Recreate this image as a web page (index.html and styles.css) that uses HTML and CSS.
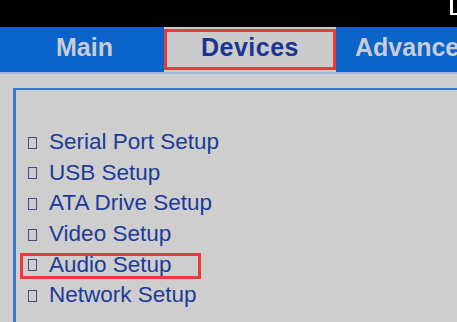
FILE: index.html
```html
<!DOCTYPE html>
<html>
<head>
<meta charset="utf-8">
<link rel="stylesheet" href="styles.css">
</head>
<body>
<div class="screen">
  <div class="topbar"><div class="corner"><div class="corner-v"></div><div class="corner-h"></div></div></div>
  <div class="tabs">
    <div class="tab tab-main">Main</div>
    <div class="tab tab-active"><span class="tab-label">Devices</span></div>
    <div class="tab tab-adv">Advanced</div>
  </div>
  <div class="body">
    <div class="panel">
      <ul class="menu">
        <li class="item"><span class="box"></span>Serial Port Setup</li>
        <li class="item"><span class="box"></span>USB Setup</li>
        <li class="item"><span class="box"></span>ATA Drive Setup</li>
        <li class="item"><span class="box"></span>Video Setup</li>
        <li class="item item-marked"><span class="box"></span>Audio Setup</li>
        <li class="item"><span class="box"></span>Network Setup</li>
      </ul>
    </div>
  </div>
</div>
</body>
</html>
```

FILE: styles.css
```css
html, body {
  margin: 0;
  padding: 0;
}
body {
  width: 457px;
  height: 322px;
  overflow: hidden;
  background: #cecece;
  font-family: "Liberation Sans", Arial, sans-serif;
}
.screen {
  display: flex;
  flex-direction: column;
  width: 457px;
  height: 322px;
  overflow: hidden;
}
.topbar {
  display: flex;
  justify-content: flex-end;
  align-items: flex-start;
  height: 27px;
  background: #000;
  flex: none;
}
.corner {
  display: flex;
  flex-direction: column;
  width: 7px;
  height: 15px;
  background: #000;
  flex: none;
}
.corner-v {
  flex: 1;
  width: 3px;
  background: #ffffff;
}
.corner-h {
  height: 2px;
  width: 7px;
  background: #ffffff;
}
.tabs {
  display: flex;
  height: 45px;
  background: #0a63c9;
  border-bottom: 2px solid #9fb6d8;
  flex: none;
  white-space: nowrap;
  overflow: hidden;
}
.tab {
  font-size: 25px;
  font-weight: bold;
  color: #c9ccd6;
  line-height: 30px;
  padding-top: 5px;
  box-sizing: border-box;
  flex: none;
}
.tab-main {
  width: 164px;
  padding-left: 56px;
}
.tab-active {
  width: 172px;
  background: #cbcbcb;
  padding: 2px 0;
  display: flex;
}
.tab-label {
  flex: 1;
  border: 3px solid #ea3a3c;
  color: #1a3592;
  text-align: center;
  line-height: 30px;
  padding-top: 0;
  letter-spacing: 0.5px;
  box-sizing: border-box;
}
.tab-adv {
  padding-left: 19px;
}
.body {
  flex: 1;
  padding: 14px 0 0 13px;
}
.panel {
  height: 100%;
  border-top: 2px solid #3d7acb;
  border-left: 3px solid #3d7acb;
  box-sizing: border-box;
}
.menu {
  list-style: none;
  margin: 0;
  padding: 37px 0 0 12px;
}
.item {
  position: relative;
  display: flex;
  align-items: center;
  height: 30.6px;
  font-size: 22.5px;
  color: #1d3b98;
  white-space: nowrap;
}
.box {
  width: 7px;
  height: 10px;
  border: 1px solid #45507e;
  margin-right: 12px;
  margin-top: 1px;
  flex: none;
}
.item-marked::after {
  content: "";
  position: absolute;
  left: -8px;
  top: 4px;
  width: 181px;
  height: 26px;
  border: 3px solid #ea3a3c;
  box-sizing: border-box;
}
```
